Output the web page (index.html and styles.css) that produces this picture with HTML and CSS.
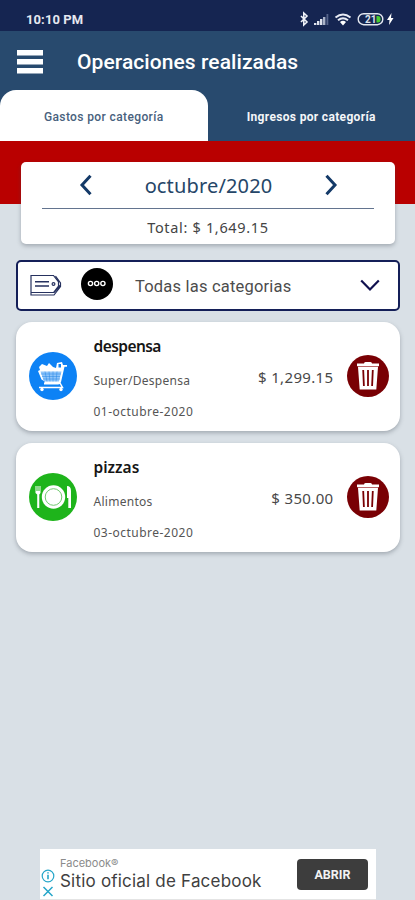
FILE: index.html
```html
<!DOCTYPE html>
<html lang="es">
<head>
<meta charset="utf-8">
<meta name="viewport" content="width=device-width, initial-scale=1">
<title>Operaciones realizadas</title>
<link rel="stylesheet" href="styles.css">
</head>
<body>
<svg class="defs" width="0" height="0" aria-hidden="true">
  <symbol id="trash" viewBox="0 0 42 42">
    <circle cx="21" cy="21" r="21" fill="#790004"/>
    <path d="M17 8.500q0-1.500 1.500-1.500h5q1.500 0 1.500 1.500h7v2.500H10V8.500zM11 12h20L29.300 34.500H12.700z" fill="#fff"/>
    <path d="M10.500 11.500h21" stroke="#c98083" stroke-width=".8"/>
    <path d="M16.200 15l.7 16M21 15v16M25.800 15l-.7 16" stroke="#790004" stroke-width="1.800" fill="none"/>
  </symbol>
</svg>
<div class="status">
  <span class="clock">10:10 PM</span>
  <svg class="indicators" width="96" height="16" viewBox="0 0 96 16" fill="none">
    <path d="M2 5l6 6-3.200 3V2L8 5l-6 6" stroke="#eef1f8" stroke-width="1.600"/>
    <path d="M15 14v-2h2.400v2zM18 14v-4h2.400v4zM21 14V8h2.400v6z" fill="#dfe3ee"/>
    <path d="M24 14V6h2.400v8z" fill="#a9b2c8"/><path d="M27.500 14V3h1.800v11z" fill="#56648b"/>
    <path d="M36.500 6.500q7.500-6 15 0M39 9.200q5-4 10 0" stroke="#e8ebf4" stroke-width="2"/>
    <path d="M41 11q3-2.500 6 0l-3 3.500z" fill="#fff"/>
    <rect x="59.200" y="2.700" width="24.600" height="11" rx="5.500" stroke="#e4e8f0" stroke-width="1.400"/>
    <path d="M77.500 5H79q2.500 0 2.500 3.200T79 11.500h-1.500z" fill="#48cf30"/>
    <text x="66" y="12" class="battery-level">21</text>
    <path d="M92.500 2l-4.500 7h2.500l-.5 5 4.500-7H92z" fill="#fff"/>
  </svg>
</div>
<header class="header">
  <svg width="26" height="24" viewBox="0 0 26 24"><path d="M0 0h26v5.500H0zM0 9h26v5.500H0zM0 18h26v5.500H0z" fill="#fff"/></svg>
  <h1>Operaciones realizadas</h1>
</header>
<nav class="tabs">
  <div class="tab active"><span>Gastos por categoría</span></div>
  <div class="tab"><span>Ingresos por categoría</span></div>
</nav>
<div class="band"></div>
<main>
  <section class="month">
    <div class="picker">
      <svg width="14" height="22" viewBox="0 0 14 22"><path d="M11.500 1.800L3 11l8.500 9.200" fill="none" stroke="#143a68" stroke-width="3"/></svg>
      <span class="month-name">octubre/2020</span>
      <svg width="14" height="22" viewBox="0 0 14 22"><path d="M2.500 1.800L11 11l-8.500 9.200" fill="none" stroke="#143a68" stroke-width="3"/></svg>
    </div>
    <div class="total"><span>Total: $ 1,649.15</span></div>
  </section>
  <section class="select">
    <svg class="tag" width="32" height="24" viewBox="0 0 32 24" fill="none" stroke="#26315f" stroke-width="1.200">
      <path d="M1 1.500h22.500l5 6.500v4l-5 6.500H1zM1 18.500v2.500h23l6.500-8.500V9L25.500 2M24 18.500l6-7"/>
      <path d="M5 7.800h14M5 12h14" stroke-width="1.500"/><circle cx="23.500" cy="10" r="1.400"/>
    </svg>
    <svg class="dots" width="32" height="32" viewBox="0 0 32 32"><circle cx="16" cy="16" r="16" fill="#000"/><g fill="none" stroke="#fff" stroke-width="1.400"><circle cx="9.500" cy="15.500" r="2.100"/><circle cx="15.700" cy="15.500" r="2.100"/><circle cx="21.900" cy="15.500" r="2.100"/></g></svg>
    <span>Todas las categorias</span>
    <svg class="down" width="20" height="13" viewBox="0 0 20 13"><path d="M1.200 1.500L10 10.500l8.800-9" fill="none" stroke="#10114f" stroke-width="2.200"/></svg>
  </section>
  <article class="entry">
    <svg class="cat" width="48" height="48" viewBox="0 0 48 48">
      <circle cx="24" cy="24" r="24" fill="#0d82f5"/>
      <path d="M11 18l-1-3 3-3 5 2 2-3 4 4 3 1 1-5 5-1 1 3h4v1.800h-2.500L32 30q-.5 2.500-3 2.500H15V31l1-1.500-3.500-2L9 19z" fill="#fff"/>
      <path d="M11.500 19.500h21L30 29.500H15z" fill="#8fc5fa"/>
      <path d="M12 22h20M13 24.500h18M14 27h17M16 19.500l2 10M20 19.500l1 10M24 19.500v10M28 19.500l-1 10" stroke="#2587e6" stroke-width=".5"/>
      <path d="M29.500 12v3.500h2.500V12z" fill="#0d82f5"/>
      <path d="M31 31l2.500 4.500H10" stroke="#fff" stroke-width="1.500" fill="none"/><circle cx="13" cy="37.500" r="1.700" fill="#fff"/><circle cx="32" cy="37.500" r="1.700" fill="#fff"/>
    </svg>
    <div class="info"><h2 class="tight">despensa</h2><p>Super/Despensa</p><p class="date">01-octubre-2020</p></div>
    <span class="amount">$ 1,299.15</span>
    <svg class="del" width="42" height="42"><use href="#trash"/></svg>
  </article>
  <article class="entry">
    <svg class="cat" width="48" height="48" viewBox="0 0 48 48">
      <circle cx="24" cy="24" r="24" fill="#1eb41b"/>
      <circle cx="24.500" cy="24" r="11.700" fill="#fff"/><circle cx="24.500" cy="24" r="8.300" fill="none" stroke="#71ca70" stroke-width="1"/>
      <path d="M6.500 13h1v5h1v-5h1v5h1v-5h1v7l-1.200 1.500V35H8.200V21.500L6.500 20zM38 13q4 0 4 5v17h-2.700V25H38z" fill="#fff"/>
    </svg>
    <div class="info"><h2>pizzas</h2><p>Alimentos</p><p class="date">03-octubre-2020</p></div>
    <span class="amount">$ 350.00</span>
    <svg class="del" width="42" height="42"><use href="#trash"/></svg>
  </article>
</main>
<aside class="ad">
  <svg class="ad-icons" width="14" height="30" viewBox="0 0 14 30" fill="none" stroke="#25a6c9" stroke-width="1.200"><circle cx="7" cy="7" r="5.800"/><path d="M7 5.800v4.500M7 3.200v1.400" stroke-width="1.600"/><path d="M2.500 18l9 9M11.500 18l-9 9" stroke-width="1.500"/></svg>
  <div class="ad-copy"><span class="brand">Facebook®</span><span class="headline">Sitio oficial de Facebook</span></div>
  <div class="open">ABRIR</div>
</aside>
</body>
</html>
```
FILE: styles.css
```css
* { box-sizing: border-box; }
body { margin: 0; height: 900px; overflow: hidden; display: flex; flex-direction: column; background: #d9e0e6; font-family: "Noto Sans", sans-serif; color: #444; }
svg { display: block; flex: none; }
.defs { height: 0; width: 0; position: absolute; }
span { white-space: nowrap; }
h1, h2, p { margin: 0; font-weight: inherit; font-size: inherit; }
.status { height: 31px; flex: none; background: #152551; display: flex; justify-content: space-between; padding: 11px 20px 0 26px; }
.clock { font: 700 13px/18px Roboto, sans-serif; letter-spacing: .1px; color: #e5e8f0; }
.battery-level { font: 700 10px Roboto, sans-serif; fill: #dce1ec; }
.header { height: 59px; flex: none; background: #284a6e; display: flex; align-items: flex-start; padding: 19px 0 0 17px; gap: 34px; }
.header h1 { font: 500 21px/24px Roboto, sans-serif; letter-spacing: .08px; color: #fff; }
.tabs { height: 51px; flex: none; display: flex; background: #284a6e; }
.tab { flex: 1; display: flex; align-items: center; justify-content: center; padding-top: 2px; font: 700 12px/16px Roboto, sans-serif; letter-spacing: .33px; color: #f4f6f9; }
.tab.active { background: #fff; color: #48617d; border-radius: 16px 16px 0 0; font-weight: 500; letter-spacing: .38px; }
.band { height: 63px; flex: none; background: #b90000; }
main { margin: -42px 15px 0 16px; display: flex; flex-direction: column; }
.month { height: 82px; margin: 0 5px 16px; background: #fff; border-radius: 5px; box-shadow: 0 2px 4px rgba(60, 70, 80, .35); padding: 0 21px; }
.picker { height: 47px; display: flex; align-items: center; justify-content: space-between; padding: 0 36px 0 37px; border-bottom: 1.500px solid #63748f; color: #254668; font-size: 20px; line-height: 26px; }
.month-name { letter-spacing: .15px; padding-top: 2px; }
.total { height: 35px; display: flex; align-items: center; justify-content: center; font-size: 14.5px; letter-spacing: .67px; padding-top: 1px; color: #444; }
.select { height: 51px; border: 2px solid #141f58; border-radius: 5px; background: #fff; display: flex; align-items: center; padding: 0 18px 0 12px; font: 400 16.5px/22px Roboto, sans-serif; letter-spacing: .2px; color: #4c4c4c; margin-bottom: 11px; }
.select span { padding-top: 2px; }
.dots { margin: -3px 22px 0 19px; }
.down { margin-left: auto; }
.entry { height: 109px; margin-bottom: 12px; background: #fff; border-radius: 16px; box-shadow: 0 2px 4px rgba(60, 70, 80, .35); display: flex; align-items: center; padding: 0 11px 0 13px; }
.cat { margin-top: -2px; }
.del { margin-top: -1px; }
.info { margin-left: 16.5px; height: 109px; padding-top: 14px; font-size: 12px; letter-spacing: .27px; color: #555; }
.info h2 { font-size: 15.5px; line-height: 21px; font-weight: 600; letter-spacing: 0; color: #161616; margin-bottom: 15px; }
.info h2.tight { letter-spacing: -.55px; }
.info p { line-height: 17px; margin-bottom: 14px; }
.info .date { letter-spacing: .48px; }
.amount { margin-left: auto; margin-right: 13.5px; font-size: 15px; letter-spacing: .35px; color: #484848; }
.ad { margin: auto 39px 0 40px; height: 51px; flex: none; background: #fff; border-bottom: 1px solid #e4e4e4; display: flex; padding-right: 8px; }
.ad-icons { margin: 20px 5px 0 1px; }
.ad-copy { display: flex; flex-direction: column; padding-top: 7px; }
.brand { font: 400 11px/14px Inter, sans-serif; color: #8b8b8b; }
.headline { font: 400 17px/23px Inter, sans-serif; letter-spacing: .2px; color: #404040; }
.open { margin: 10px 0 0 auto; width: 71px; height: 31px; border-radius: 4px; background: #3d3d3d; color: #f2f2f2; font: 700 12.5px/31px Roboto, sans-serif; text-align: center; }
```
